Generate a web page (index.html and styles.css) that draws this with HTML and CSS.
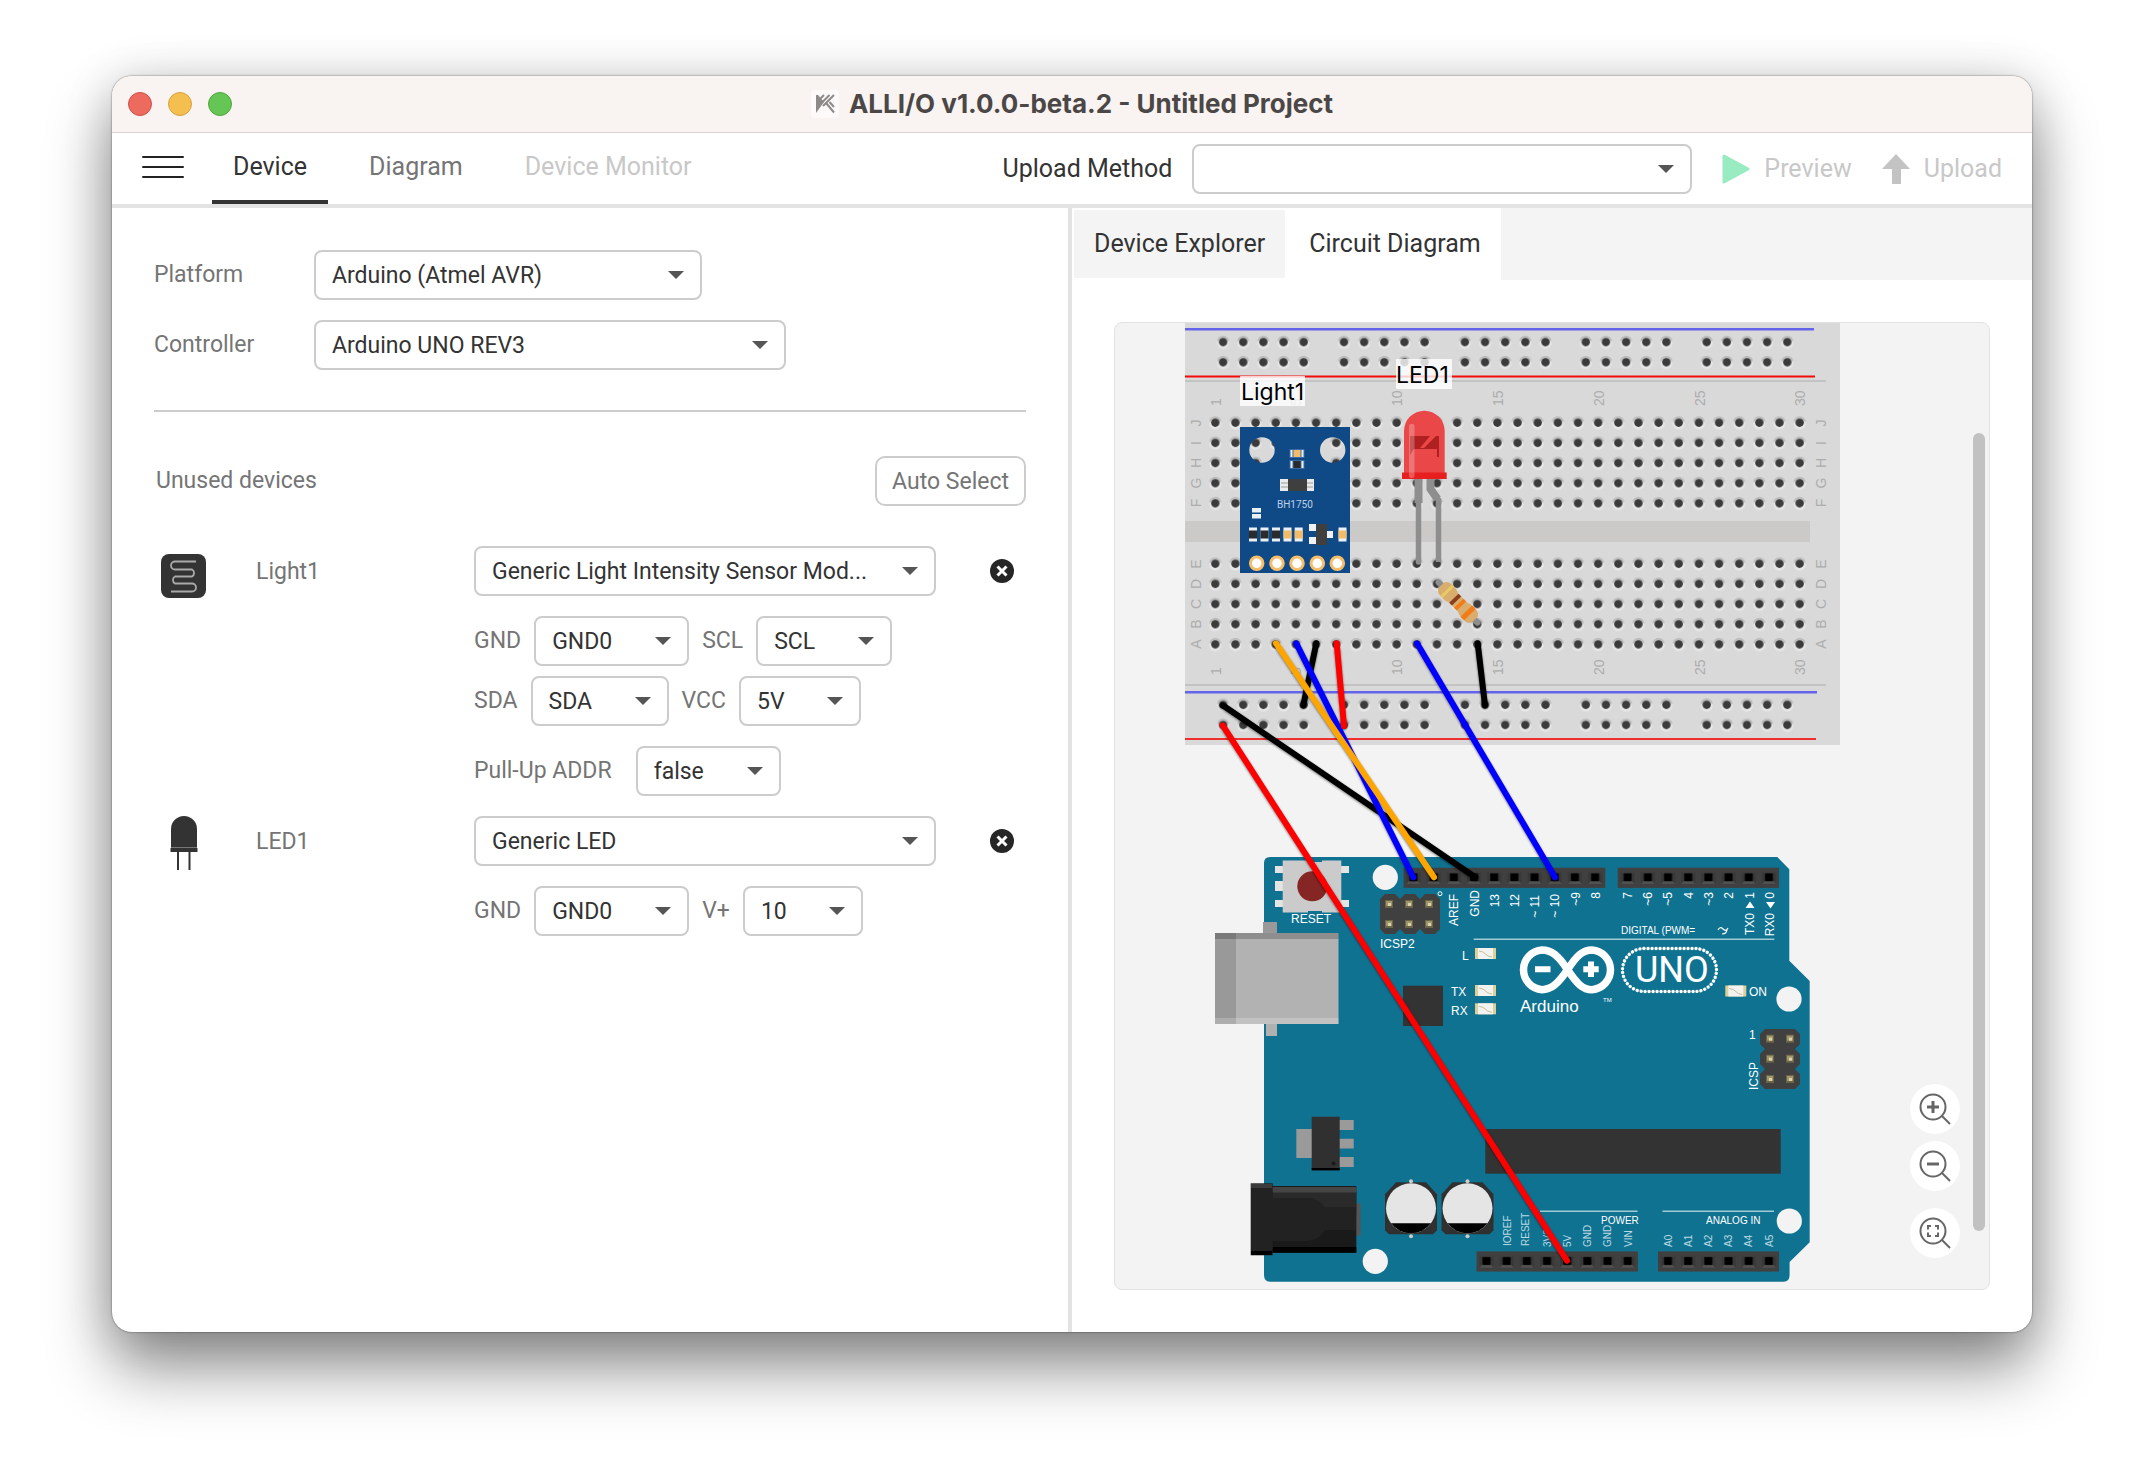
FILE: index.html
```html
<!DOCTYPE html>
<html lang="en">
<head>
<meta charset="utf-8">
<title>ALLI/O v1.0.0-beta.2 - Untitled Project</title>
<link rel="stylesheet" href="styles.css">
</head>
<body>
<div class="window">
  <header class="titlebar">
    <div class="lights">
      <button class="light light-close" aria-label="Close"></button>
      <button class="light light-min" aria-label="Minimize"></button>
      <button class="light light-max" aria-label="Zoom"></button>
    </div>
    <h1 class="title">
      <svg class="title-icon" viewBox="0 0 28 28" aria-hidden="true"><rect width="28" height="28" rx="4" fill="#fdfaf9"/><path d="M5 5h2l6 7L5 23z" fill="#8d8a89"/><path d="M9 9l4-4M11.500 12L18.500 5M12 16L23 5M15.500 13.500l7.500 9M18.500 12l4.500 5" stroke="#8d8a89" stroke-width="2" fill="none"/></svg>
      ALLI/O v1.0.0-beta.2 - Untitled Project
    </h1>
  </header>

  <div class="toolbar">
    <button class="menu-button" aria-label="Menu"><span></span><span></span><span></span></button>
    <nav class="tabs">
      <button class="tab tab-active">Device</button>
      <button class="tab">Diagram</button>
      <button class="tab" disabled>Device Monitor</button>
    </nav>
    <div class="upload">
      <label for="upload-method">Upload Method</label>
      <select id="upload-method" class="select upload-select"><option></option></select>
      <button class="action" disabled>
        <svg width="28" height="30" viewBox="0 0 28 30" aria-hidden="true"><path d="M2 2l24 13L2 28z" fill="#99ebc1" stroke="#99ebc1" stroke-width="3" stroke-linejoin="round"/></svg>
        Preview
      </button>
      <button class="action" disabled>
        <svg width="28" height="30" viewBox="0 0 28 30" aria-hidden="true"><path d="M14 0l14 15h-9v15H10V15H0z" fill="#c3c3c3"/></svg>
        Upload
      </button>
    </div>
  </div>

  <main class="panes">
    <section class="pane-left">
      <div class="board">
        <label for="platform">Platform</label>
        <select id="platform" class="select platform"><option>Arduino (Atmel AVR)</option></select>
        <label for="controller">Controller</label>
        <select id="controller" class="select controller"><option>Arduino UNO REV3</option></select>
      </div>
      <hr class="rule">
      <div class="devices-head">
        <h2>Unused devices</h2>
        <button class="auto-select">Auto Select</button>
      </div>
      <div class="device">
        <svg class="device-icon" viewBox="0 0 46 54" aria-hidden="true"><rect width="45" height="44" x="0" y="8" rx="8" fill="#333"/><path d="M35 15.500H14a4 4 0 0 0 0 8h17a4 4 0 0 1 0 7H14a4 4 0 0 0 0 7h17a4 4 0 0 1 0 8H10" fill="none" stroke="#aaa" stroke-width="1.800"/></svg>
        <label class="device-name" for="light-type">Light1</label>
        <div class="settings">
          <select id="light-type" class="select"><option>Generic Light Intensity Sensor Mod...</option></select>
          <div class="pins">
            <div class="pin"><label for="l-gnd">GND</label><select id="l-gnd" class="select"><option>GND0</option></select></div>
            <div class="pin"><label for="l-scl">SCL</label><select id="l-scl" class="select"><option>SCL</option></select></div>
            <div class="pin"><label for="l-sda">SDA</label><select id="l-sda" class="select"><option>SDA</option></select></div>
            <div class="pin"><label for="l-vcc">VCC</label><select id="l-vcc" class="select"><option>5V</option></select></div>
          </div>
          <div class="param"><label for="l-addr">Pull-Up ADDR</label><select id="l-addr" class="select"><option>false</option></select></div>
        </div>
        <button class="remove" aria-label="Remove Light1"><svg viewBox="0 0 24 24" width="24" height="24"><circle cx="12" cy="12" r="12" fill="#262626"/><path d="M7.500 7.500l9 9m0-9l-9 9" stroke="#fff" stroke-width="3"/></svg></button>
      </div>
      <div class="device">
        <svg class="device-icon" viewBox="0 0 46 54" aria-hidden="true"><path d="M10 31V13a13 13 0 0 1 26 0v18z" fill="#333"/><path d="M9.500 32h27v4h-27z" fill="#333"/><path d="M10 31.500h26" stroke="#777" stroke-width="1"/><path d="M17 35v19M28.500 35v19" stroke="#333" stroke-width="2"/></svg>
        <label class="device-name" for="led-type">LED1</label>
        <div class="settings">
          <select id="led-type" class="select"><option>Generic LED</option></select>
          <div class="pins">
            <div class="pin"><label for="d-gnd">GND</label><select id="d-gnd" class="select"><option>GND0</option></select></div>
            <div class="pin"><label for="d-v">V+</label><select id="d-v" class="select"><option>10</option></select></div>
          </div>
        </div>
        <button class="remove" aria-label="Remove LED1"><svg viewBox="0 0 24 24" width="24" height="24"><circle cx="12" cy="12" r="12" fill="#262626"/><path d="M7.500 7.500l9 9m0-9l-9 9" stroke="#fff" stroke-width="3"/></svg></button>
      </div>
    </section>

    <section class="pane-right">
      <nav class="view-tabs">
        <button class="view-tab">Device Explorer</button>
        <button class="view-tab view-tab-active">Circuit Diagram</button>
      </nav>
      <div class="canvas-area">
        <div class="canvas">
          <svg class="diagram" viewBox="1115 323 874 966" preserveAspectRatio="xMidYMin meet" role="img" aria-label="Circuit diagram">
            <defs>
              <g id="hole"><circle r="6" fill="#e6e6e6" cy="1"/><path d="M-6 -1a6 5.500 0 0 1 12 0z" fill="#bdbdbd"/><circle r="4.200" fill="#3b3b3b"/></g>
              <pattern id="grid" patternUnits="userSpaceOnUse" x="1205.200" y="412.600" width="20.150" height="20.150"><use href="#hole" x="10.100" y="10.100"/></pattern>
              <pattern id="rail" patternUnits="userSpaceOnUse" x="1213" y="332" width="20.150" height="20.150"><use href="#hole" x="10.100" y="10.100"/></pattern>
              <pattern id="socket" patternUnits="userSpaceOnUse" width="20.180" height="20.180"><rect width="21" height="21" fill="#404040"/><path d="M3 16L6 13H14L17 16z" fill="#545454"/><path d="M3 4v12l3-3V6zM17 4v12l-3-3V6z" fill="#383838"/><rect x="6" y="5.600" width="8" height="8"/></pattern>
              <g id="pinpad"><rect x="-4" y="-4" width="8" height="8" fill="#6b6548"/><rect x="-3" y="-3" width="6" height="5" fill="#a0966c"/><rect x="-1" y="-1" width="3" height="3" fill="#d9d2ab"/></g>
              <g id="lamp"><rect width="21" height="11" fill="#dccf98"/><rect x="3" width="15" height="11" fill="#f2f2f0"/><path d="M4 3l4 1 5 4 4 1" fill="none" stroke="#c9c09c"/></g>
              <g id="smd-d"><rect x="-4" y="-7" width="8" height="14" fill="#e9f0f8"/><rect x="-4" y="-4" width="8" height="8" fill="#2b2b2b"/></g>
              <g id="smd-o"><rect x="-4" y="-7" width="8" height="14" fill="#e9f0f8"/><rect x="-4" y="-4" width="8" height="8" fill="#f2bb68"/></g>
              <g id="cap"><path d="M-26 -14l11-12h30l11 12v36l-4 4h-44l-4-4z" fill="#303030"/><circle r="25" fill="#e5e5e5"/><path d="M-20 15h40a25 25 0 0 1-40 0z"/><circle cy="-27" r="2" fill="#ccc"/><circle cy="28" r="2" fill="#ccc"/></g>
            </defs>

            <!-- breadboard -->
            <rect x="1185" y="323" width="655" height="422" fill="#d9d9d9"/>
            <path d="M1185 329.300h629M1185 692.200h632" stroke="#6464ea" stroke-width="2.600"/>
            <path d="M1185 376.500h630" stroke="#f60a0a" stroke-width="2"/>
            <path d="M1185 739h631" stroke="#f03030" stroke-width="2"/>
            <path d="M1185 381h641M1185 685h641" stroke="#c3c3c3" stroke-width="2"/>
            <rect x="1185" y="521" width="625" height="21" fill="#cbcac8"/>
            <path d="M1205.200 412.600h604.500v100.750h-604.500zM1205.200 553.650h604.500v100.750h-604.500z" fill="url(#grid)"/>
            <path d="M1213 332h100.700v40.300h-100.700zM1333.900 332h100.700v40.300h-100.700zM1454.800 332h100.700v40.300h-100.700zM1575.700 332h100.700v40.300h-100.700zM1696.600 332h100.700v40.300h-100.700zM1213 694.700h100.700v40.300h-100.700zM1333.900 694.700h100.700v40.300h-100.700zM1454.800 694.700h100.700v40.300h-100.700zM1575.700 694.700h100.700v40.300h-100.700zM1696.600 694.700h100.700v40.300h-100.700z" fill="url(#rail)"/>
            <g class="bb-label">
              <text transform="translate(1221 406) rotate(-90)">1</text><text transform="translate(1301 406) rotate(-90)">5</text><text transform="translate(1402 406) rotate(-90)">10</text><text transform="translate(1503 406) rotate(-90)">15</text><text transform="translate(1604 406) rotate(-90)">20</text><text transform="translate(1705 406) rotate(-90)">25</text><text transform="translate(1805 406) rotate(-90)">30</text>
              <text transform="translate(1221 675) rotate(-90)">1</text><text transform="translate(1301 675) rotate(-90)">5</text><text transform="translate(1402 675) rotate(-90)">10</text><text transform="translate(1503 675) rotate(-90)">15</text><text transform="translate(1604 675) rotate(-90)">20</text><text transform="translate(1705 675) rotate(-90)">25</text><text transform="translate(1805 675) rotate(-90)">30</text>
            </g>
            <g class="bb-label bb-row">
              <text transform="translate(1201 423) rotate(-90)">J</text><text transform="translate(1201 443) rotate(-90)">I</text><text transform="translate(1201 463) rotate(-90)">H</text><text transform="translate(1201 483) rotate(-90)">G</text><text transform="translate(1201 503) rotate(-90)">F</text><text transform="translate(1201 564) rotate(-90)">E</text><text transform="translate(1201 584) rotate(-90)">D</text><text transform="translate(1201 604) rotate(-90)">C</text><text transform="translate(1201 624) rotate(-90)">B</text><text transform="translate(1201 644) rotate(-90)">A</text>
              <text transform="translate(1826 423) rotate(-90)">J</text><text transform="translate(1826 443) rotate(-90)">I</text><text transform="translate(1826 463) rotate(-90)">H</text><text transform="translate(1826 483) rotate(-90)">G</text><text transform="translate(1826 503) rotate(-90)">F</text><text transform="translate(1826 564) rotate(-90)">E</text><text transform="translate(1826 584) rotate(-90)">D</text><text transform="translate(1826 604) rotate(-90)">C</text><text transform="translate(1826 624) rotate(-90)">B</text><text transform="translate(1826 644) rotate(-90)">A</text>
            </g>

            <!-- light sensor module -->
            <path fill-rule="evenodd" d="M1240 427h110v146h-110zM1249.300 450a12.700 12.700 0 1 0 25.400 0a12.700 12.700 0 1 0-25.400 0zM1320 450a12.700 12.700 0 1 0 25.400 0a12.700 12.700 0 1 0-25.400 0z" fill="#0f4a87"/>
            <g stroke="#3a6ca3"><use href="#smd-o" transform="translate(1297 453.500) rotate(90)"/><use href="#smd-d" transform="translate(1297 464.500) rotate(90)"/></g>
            <rect x="1280" y="479" width="34" height="12" fill="#e9ebee"/><path d="M1281 483h32M1281 487h32" stroke="#a39a90"/><rect x="1288" y="479" width="19" height="12" fill="#3f3f3f"/>
            <text x="1277" y="508" class="chip-label">BH1750</text>
            <path d="M1252 508h9v4.500h-9zM1252 514h9v4.500h-9z" fill="#e9f0f8"/>
            <use href="#smd-d" x="1253" y="534.500"/><use href="#smd-d" x="1264.500" y="534.500"/><use href="#smd-d" x="1276" y="534.500"/><use href="#smd-o" x="1287.500" y="534.500"/><use href="#smd-o" x="1298.700" y="534.500"/><use href="#smd-o" x="1342.500" y="534.500"/>
            <path d="M1309 524h7v7h-7zM1309 537h7v7h-7zM1327 531h6v7h-6z" fill="#eef2f6"/><rect x="1316" y="524" width="11" height="21" fill="#3f3f3f"/>
            <g fill="#fff" stroke="#f6bd6a" stroke-width="3"><circle cx="1256.700" cy="563.300" r="6.300"/><circle cx="1277" cy="563.300" r="6.300"/><circle cx="1297" cy="563.300" r="6.300"/><circle cx="1317.300" cy="563.300" r="6.300"/><circle cx="1337.300" cy="563.300" r="6.300"/></g>

            <!-- LED and resistor -->
            <g fill="none" stroke="#8e8e8e"><path d="M1418.500 479v24" stroke-width="8"/><path d="M1418.500 500v62" stroke-width="5.500" stroke-linecap="round"/><path d="M1430.500 479v10l8 11v62" stroke-width="5.500"/><path d="M1430.500 479v10l7 10" stroke-width="8"/></g>
            <path d="M1404 473v-42a20.300 20.300 0 0 1 40.700 0v42z" fill="#e94748"/>
            <path d="M1410 436h20l-10 12h4l12-12h3v21h-2v-8h-23l-4 6z" fill="#b12020"/>
            <rect x="1402" y="472.500" width="44.700" height="6.500" fill="#e81f1f"/>
            <rect x="1409" y="424" width="5.500" height="54" rx="2" fill="#fff" opacity=".25"/>
            <g transform="translate(1458 602.500) rotate(46)"><path d="M-28 0H28" stroke="#8e8e8e" stroke-width="6" stroke-linecap="round"/><path d="M-24 -4q2-4 6-4h6q3 0 5 1.500H7q2-1.500 5-1.500h6q4 0 6 4v8q-2 4-6 4h-6q-3 0-5-1.500H-7q-2 1.500-5 1.500h-6q-4 0-6-4z" fill="#d9ad6e"/><rect x="-17" y="-8" width="3" height="16" fill="#e8cb62"/><rect x="-6" y="-6.500" width="4" height="13" fill="#8a3f1b"/><rect x="1" y="-6.500" width="4" height="13" fill="#f27c17"/><rect x="12" y="-8" width="5" height="16" fill="#f27c17"/></g>

            <rect x="1240" y="376" width="65" height="30" fill="#fff" fill-opacity=".8"/><text x="1241" y="400" class="part-label">Light1</text>
            <rect x="1396" y="359" width="56" height="30" fill="#fff" fill-opacity=".8"/><text x="1396" y="383" class="part-label">LED1</text>

            <!-- Arduino UNO board -->
            <path fill-rule="evenodd" d="M1270 857H1777.300L1789.300 869.300V960.700L1809.700 981V1242.300L1789.600 1262V1275q0 6.700-6 6.700H1270q-6 0-6-6.700V863q0-6 6-6z" fill="#107291"/>
            <g fill="#f3f3f3"><circle cx="1385.300" cy="877.300" r="12.600"/><circle cx="1789" cy="999" r="12.600"/><circle cx="1375.300" cy="1261.300" r="12.600"/><circle cx="1789.300" cy="1221" r="12.600"/></g>
            <path d="M1275 866h74v7h-74zM1275 881h14v10h-14zM1275 900h74v7h-74z" fill="#e4e4e4"/><rect x="1282.700" y="860.500" width="58.600" height="52" fill="#cbcbcb"/><path d="M1308 860h14v2h-14zM1308 911h14v2h-14z" fill="#107291"/><circle cx="1312.300" cy="886.300" r="15" fill="#852524"/>
            <path d="M1263 922h14v12h-14z" fill="#999"/><path d="M1266 1024h11v12h-11z" fill="#b0b0b0"/>
            <rect x="1215" y="933" width="123.500" height="91" fill="#b2b2b2"/><rect x="1215" y="933" width="21" height="91" fill="#999"/><rect x="1215" y="933" width="123.500" height="6" fill="#000" opacity=".2"/><rect x="1215" y="1018" width="123.500" height="6" fill="#fff" opacity=".2"/>
            <g fill="#404040"><path d="M1385 894h10l5 5v30l-5 5h-10l-5-5v-30zM1405 894h10l5 5v30l-5 5h-10l-5-5v-30zM1425 894h10l5 5v30l-5 5h-10l-5-5v-30z"/><path d="M1765 1029h30l5 5v10l-5 5h-30l-5-5v-10zM1765 1049h30l5 5v10l-5 5h-30l-5-5v-10zM1765 1069h30l5 5v10l-5 5h-30l-5-5v-10z"/></g>
            <use href="#pinpad" x="1389" y="904"/><use href="#pinpad" x="1409" y="904"/><use href="#pinpad" x="1429" y="904"/><use href="#pinpad" x="1389" y="924"/><use href="#pinpad" x="1409" y="924"/><use href="#pinpad" x="1429" y="924"/>
            <use href="#pinpad" x="1770" y="1038.700"/><use href="#pinpad" x="1790" y="1038.700"/><use href="#pinpad" x="1770" y="1058.700"/><use href="#pinpad" x="1790" y="1058.700"/><use href="#pinpad" x="1770" y="1079"/><use href="#pinpad" x="1790" y="1079"/>
            <circle cx="1440" cy="893.700" r="2" fill="none" stroke="#fff"/>
            <rect width="201.800" height="20.200" transform="translate(1403.500 867.700)" fill="url(#socket)"/>
            <rect width="161.400" height="20.200" transform="translate(1617.700 867.700)" fill="url(#socket)"/>
            <rect width="161.400" height="20.200" transform="translate(1476.500 1251.400)" fill="url(#socket)"/>
            <rect width="121.100" height="20.200" transform="translate(1658 1251.400)" fill="url(#socket)"/>
            <use href="#lamp" x="1475" y="948"/><use href="#lamp" x="1475" y="985"/><use href="#lamp" x="1475" y="1003.300"/><use href="#lamp" x="1725.300" y="985.500"/>
            <rect x="1403" y="985.700" width="40" height="40.300" fill="#333"/>
            <rect x="1485.300" y="1129" width="295.400" height="44.700" fill="#333"/>
            <path d="M1296.300 1129h15.700v29h-15.700zM1339 1120h14.700v10H1339zM1339 1138.700h14.700v9.700H1339zM1339 1157h14.700v10H1339z" fill="#9a9a9a"/><rect x="1311.700" y="1116.700" width="28" height="53.600" fill="#303030"/><rect x="1311.700" y="1168" width="28" height="2.300"/><circle cx="1333.500" cy="1163.500" r="2" fill="#1a1a1a"/>
            <rect x="1356" y="1203.500" width="4.500" height="32" fill="#555"/><rect x="1272" y="1186" width="84.300" height="66.700" fill="#1a1a1a"/><rect x="1272" y="1192" width="84.300" height="23" fill="#2a2a2a"/><rect x="1272" y="1187" width="84.300" height="5.500" fill="#454545"/><rect x="1272" y="1247" width="84.300" height="5.700" fill="#000"/><path d="M1272 1198h35q11 0 18 9h31v23h-31q-7 11-18 11h-35z" fill="#222"/><rect x="1250.700" y="1183.300" width="22" height="72" fill="#222"/><rect x="1251" y="1184" width="21" height="4" fill="#3b3b3b"/><rect x="1251" y="1251" width="21" height="4" fill="#000"/>
            <use href="#cap" x="1411" y="1208.300"/><use href="#cap" x="1467.500" y="1208.300"/>
            <path d="M1473.700 939.300h300.600M1540 1211.300h97.500M1662.500 1211.300h111.500" stroke="#9fcbd6" stroke-width="1.600"/>

            <g fill="none" stroke="#fff"><path d="M1567.500 969.700C1558 955 1551 950 1542 950A19.900 19.900 0 0 0 1542 989.700C1551 989.700 1558 984 1567.500 969.700C1577 955 1583 950 1592 950A19.900 19.900 0 0 1 1592 989.700C1583 989.700 1577 984 1567.500 969.700z" stroke-width="7.500"/><path d="M1535 969.300h15.500M1583.300 969.300h15.400M1591 961.500v15.600" stroke-width="6"/><rect x="1622.500" y="948.500" width="94" height="43" rx="21.500" stroke-width="3.400" stroke-linecap="round" stroke-dasharray="0.100 3.900"/></g>
            <g class="board-text">
              <text x="1635" y="982" class="uno">UNO</text><text x="1520" y="1012" class="brand">Arduino</text><text x="1603" y="1002" class="tm">TM</text>
              <text x="1291" y="923">RESET</text><text x="1380" y="948">ICSP2</text>
              <text x="1462" y="960">L</text><text x="1451" y="996">TX</text><text x="1451" y="1015">RX</text><text x="1749" y="996">ON</text><text x="1749" y="1039">1</text>
              <text transform="translate(1758 1090) rotate(-90)">ICSP</text>
              <g class="top-pins">
                <text transform="translate(1458 894) rotate(-90)">AREF</text><text transform="translate(1479 890) rotate(-90)">GND</text><text transform="translate(1499 894) rotate(-90)">13</text><text transform="translate(1519 894) rotate(-90)">12</text><text transform="translate(1539 895) rotate(-90)">~ 11</text><text transform="translate(1559 894) rotate(-90)">~ 10</text><text transform="translate(1580 892) rotate(-90)">~9</text><text transform="translate(1600 892) rotate(-90)">8</text>
                <text transform="translate(1632 892) rotate(-90)">7</text><text transform="translate(1652 892) rotate(-90)">~6</text><text transform="translate(1672 892) rotate(-90)">~5</text><text transform="translate(1693 892) rotate(-90)">4</text><text transform="translate(1713 892) rotate(-90)">~3</text><text transform="translate(1733 892) rotate(-90)">2</text><text transform="translate(1754 892) rotate(-90)">1</text><text transform="translate(1774 892) rotate(-90)">0</text>
                <text transform="translate(1754 913) rotate(-90)">TX0</text><text transform="translate(1774 913) rotate(-90)">RX0</text>
              </g>
              <path d="M1745.500 908l4.500-6.500 4.500 6.500zM1766 902l4.500 6.500 4.500-6.500z"/>
              <path d="M1718 930q2-4 5-1t5-1M1722 934q5 0 5-5" fill="none" stroke="#fff" stroke-width="1.200"/>
              <g class="small"><text x="1621" y="934">DIGITAL (PWM=</text><text x="1601" y="1224">POWER</text><text x="1706" y="1224">ANALOG IN</text>
                <g class="power-pins"><text transform="translate(1511 1246) rotate(-90)">IOREF</text><text transform="translate(1529 1246) rotate(-90)">RESET</text><text transform="translate(1551 1247) rotate(-90)">3V3</text><text transform="translate(1571 1247) rotate(-90)">5V</text><text transform="translate(1591 1247) rotate(-90)">GND</text><text transform="translate(1611 1247) rotate(-90)">GND</text><text transform="translate(1632 1247) rotate(-90)">VIN</text>
                <text transform="translate(1672 1247) rotate(-90)">A0</text><text transform="translate(1692 1247) rotate(-90)">A1</text><text transform="translate(1712 1247) rotate(-90)">A2</text><text transform="translate(1732 1247) rotate(-90)">A3</text><text transform="translate(1752 1247) rotate(-90)">A4</text><text transform="translate(1773 1247) rotate(-90)">A5</text></g></g>
            </g>

            <!-- wires -->
            <g class="wires">
              <path d="M1316.300 643.300L1303.300 705.300" stroke="#000"/><path d="M1477.700 643.300L1485 705.300" stroke="#000"/>
              <path d="M1222.700 705.300L1475.300 877.300" stroke="#000"/>
              <path d="M1296.300 643.300L1413.300 877.300" stroke="#00f"/><path d="M1336.700 643.300L1344 726" stroke="#f00"/>
              <path d="M1276 643.300L1434 877.300" stroke="#ffa500"/><path d="M1417 643.300L1555 877.300" stroke="#00f"/>
              <path d="M1222.700 725.300L1567 1260.700" stroke="#f00"/>
            </g>
          </svg>
          <div class="scrollbar"></div>
          <div class="zoom">
            <button aria-label="Zoom in"><svg viewBox="0 0 50 50"><circle cx="23" cy="23" r="12.500"/><path d="M32 32l8 8"/><path d="M17 23h12M23 17v12" stroke-width="3"/></svg></button>
            <button aria-label="Zoom out"><svg viewBox="0 0 50 50"><circle cx="23" cy="23" r="12.500"/><path d="M32 32l8 8"/><path d="M17 23h12" stroke-width="3"/></svg></button>
            <button class="zoom-fit" aria-label="Fit to view"><svg viewBox="0 0 50 50"><circle cx="23" cy="23" r="12.500"/><path d="M32 32l8 8"/><path d="M21 18h-3v3.500M25 18h3v3.500M21 28h-3v-3.500M25 28h3v-3.500"/></svg></button>
          </div>
        </div>
      </div>
    </section>
  </main>
</div>
</body>
</html>
```
FILE: styles.css
```css
* { box-sizing: border-box; }

body {
  margin: 0;
  min-height: 100vh;
  padding: 76px 112px 148px;
  display: flex;
  background: #fff;
  color: #757575;
  font: 400 23px/28px Roboto, "Liberation Sans", sans-serif;
}

button, select { font: inherit; color: inherit; }
button { background: none; border: 0; padding: 0; }

.window {
  flex: 1;
  min-width: 0;
  display: flex;
  flex-direction: column;
  background: #fff;
  border-radius: 20px;
  overflow: hidden;
  box-shadow: 0 0 2px rgba(0, 0, 0, .6), 0 36px 64px rgba(0, 0, 0, .44), 0 4px 48px rgba(0, 0, 0, .16);
}

.titlebar {
  display: flex;
  align-items: center;
  height: 57px;
  background: #f9f3f1;
  border-bottom: 1px solid #d8d4d3;
}
.lights { display: flex; gap: 16px; padding-left: 16px; width: 120px; }
.light { width: 24px; height: 24px; border-radius: 50%; border: 1px solid; }
.light-close { background: #ec6a5e; border-color: #d05147; }
.light-min { background: #f4bf4f; border-color: #d6a243; }
.light-max { background: #65c655; border-color: #51a73e; }
.title {
  flex: 1;
  display: flex;
  align-items: center;
  justify-content: center;
  gap: 10px;
  margin: 0;
  padding-right: 120px;
  color: #4b4747;
  font: 700 26px/32px Inter, sans-serif;
}
.title-icon { width: 28px; height: 28px; }

.toolbar {
  display: flex;
  align-items: stretch;
  height: 75px;
  padding: 0 30px;
  border-bottom: 4px solid #e3e3e3;
  font-size: 25px;
  color: #333;
}
.menu-button {
  width: 42px;
  display: flex;
  flex-direction: column;
  justify-content: center;
  gap: 8px;
  padding-bottom: 4px;
}
.menu-button span { height: 2px; border-radius: 1px; background: #222; }
.tabs { display: flex; gap: 20px; margin-left: 28px; }
.tab { padding: 0 21px; border-bottom: 4px solid transparent; color: #757575; }
.tab-active { color: #333; border-color: #333; }
.tab:disabled, .action:disabled { color: #c8c8c8; }
.upload { display: flex; align-items: center; margin-left: auto; }
.upload-select { width: 500px; margin-left: 20px; }
.action { display: flex; align-items: center; gap: 14px; margin-left: 30px; }

.select {
  appearance: none;
  height: 50px;
  padding: 2px 44px 0 16px;
  border: 2px solid #ccc;
  border-radius: 8px;
  color: #333;
  background: #fff url("data:image/svg+xml,%3Csvg xmlns='http://www.w3.org/2000/svg' width='16' height='8'%3E%3Cpath d='M0 0h16L8 8z' fill='%23555'/%3E%3C/svg%3E") no-repeat right 16px center;
}

.panes { flex: 1; display: grid; grid-template-columns: 1fr 1fr; }
.pane-left { padding: 42px; border-right: 4px solid #e3e3e3; }

.board {
  display: grid;
  grid-template-columns: 160px 1fr;
  gap: 20px 0;
  align-items: center;
}
.platform { width: 388px; }
.controller { width: 472px; }
.rule { margin: 40px 0 44px; border: 0; border-top: 2px solid #ccc; }
.devices-head {
  display: flex;
  justify-content: space-between;
  align-items: center;
  margin-bottom: 40px;
}
.devices-head h2 { margin: 0 2px; font: inherit; }
.auto-select { height: 50px; padding: 2px 15px 0; border: 2px solid #ccc; border-radius: 10px; }

.device {
  display: grid;
  grid-template-columns: 102px 218px 462px 1fr;
  align-items: start;
  margin-bottom: 20px;
}
.device-icon { width: 46px; height: 54px; margin-left: 7px; }
.device-name { line-height: 52px; }
.settings { display: grid; grid-template-columns: minmax(0, 1fr); gap: 20px; }
.pins { display: flex; flex-wrap: wrap; gap: 10px 13px; }
.pin { display: flex; align-items: center; gap: 13px; }
.pin .select, .param .select { padding-right: 74px; }
.param { display: flex; align-items: center; gap: 24px; }
.remove {
  display: grid;
  place-items: center;
  width: 48px;
  height: 50px;
  justify-self: end;
}

.pane-right { display: flex; flex-direction: column; min-width: 0; }
.view-tabs { display: flex; height: 72px; background: #f4f4f4; font-size: 25px; }
.view-tab { padding: 0 20px; border: 2px solid #fff; color: #333; }
.view-tab-active { padding: 0 18px 0 20px; background: #fff; }
.canvas-area { flex: 1; display: flex; padding: 42px; }
.canvas {
  position: relative;
  flex: 1;
  min-width: 0;
  border: 1px solid #e2e2e2;
  border-radius: 8px;
  overflow: hidden;
  background: #f3f3f3;
}
.diagram { display: block; width: 100%; height: 100%; }
.scrollbar {
  position: absolute;
  top: 110px;
  right: 4px;
  bottom: 58px;
  width: 12px;
  border-radius: 6px;
  background: #c1c1c1;
}
.zoom {
  position: absolute;
  right: 29px;
  bottom: 31px;
  display: flex;
  flex-direction: column;
  gap: 7px;
}
.zoom button { width: 50px; height: 50px; border-radius: 50%; background: #fff; }
.zoom svg { display: block; fill: none; stroke: #666; stroke-width: 2; }
.zoom .zoom-fit { margin-top: 10px; }

.bb-label { font: 14px "Liberation Sans", sans-serif; fill: #adadad; }
.bb-row { text-anchor: middle; }
.part-label { font: 400 23px Inter, sans-serif; fill: #000; }
.chip-label { font: 10px Roboto, sans-serif; fill: #bdd1e8; }
.board-text { font: 12px "Liberation Sans", sans-serif; fill: #fff; }
.uno { font: 400 36px Roboto, sans-serif; }
.brand { font-size: 17px; }
.tm { font-size: 6px; }
.top-pins { text-anchor: end; font-size: 12px; }
.small { font-size: 10px; }
.power-pins { fill: #b9dae2; }
.wires {
  fill: none;
  stroke-width: 6;
  stroke-linecap: round;
  filter: drop-shadow(0 1px 1px rgba(0, 0, 0, .5));
}
```
